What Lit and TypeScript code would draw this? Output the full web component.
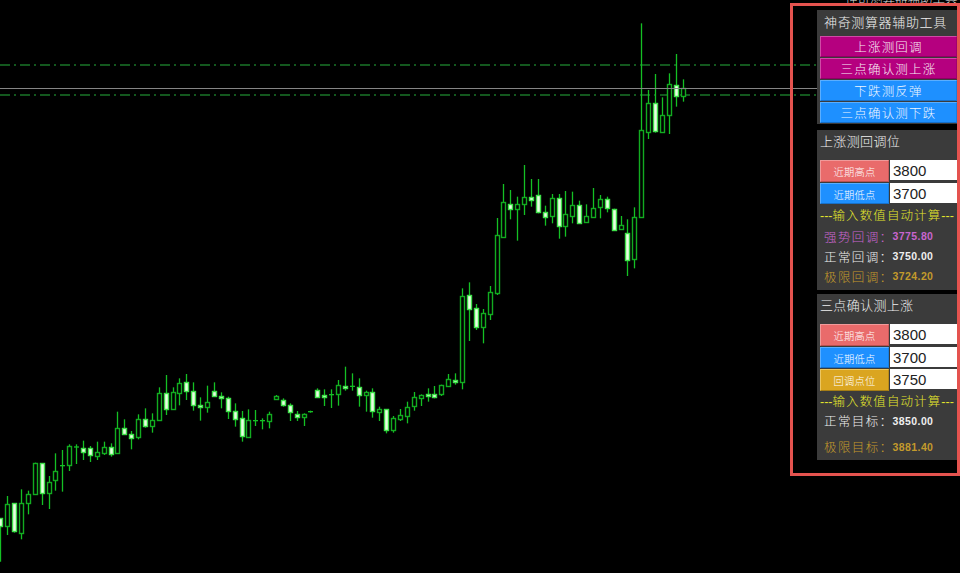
import { LitElement, html, css, svg } from "lit";
import { customElement } from "lit/decorators.js";

// [high, low, bodyTop, bodyBottom, filled] in zoom-crop pixels
type C = [number, number, number, number, number];
const G1: C[] = [
  [475,605,475,498,1],[408,525,433,498,0],[430,518,430,515,1],[388,538,428,517,0],[392,463,403,430,0],
  [308,402,308,402,0],[309,435,309,400,1],[348,447,367,401,0],[280,392,333,361,0],[270,395,316,318,2],
  [253,333,259,317,0],[253,312,260,262,2],[242,300,264,277,1],[258,306,263,284,1],[245,300,276,287,0],
  [245,285,260,278,0],[250,290,262,284,1],[155,282,204,280,0],[178,225,205,222,1],[213,268,222,233,1],
  [163,238,178,233,0],[145,203,178,198,1],[160,218,181,200,0],[82,183,100,182,0],[45,165,100,148,1],
  [82,150,97,149,0],[55,136,68,97,0],[42,120,65,93,1],[67,152,93,135,1],[112,182,136,143,1],
  [77,158,127,143,0],[67,110,93,108,1],[97,145,108,114,1],[110,177,115,155,1],[130,200,152,176,1],
];
const G2: C[] = [
  [423,515,445,500,1],[418,500,450,500,0],[420,468,451,453,2],[445,478,451,453,2],[425,475,432,452,0],
  [375,388,378,387,0],[385,410,391,405,1],[400,453,404,426,1],[423,453,432,441,1],[430,468,433,441,0],
  [422,428,424,426,2],[355,383,360,382,1],[358,408,375,382,1],[358,414,373,375,2],[330,407,344,371,0],
  [290,362,347,351,1],[310,362,348,350,2],[325,410,350,374,1],[362,425,366,374,0],[355,443,367,425,1],
  [410,453,416,426,0],[417,490,417,480,1],[438,488,444,480,0],[417,453,434,446,0],[395,460,411,437,0],
  [366,422,382,410,0],[373,408,376,385,0],[355,395,373,380,1],[348,385,373,381,1],[344,378,344,372,0],
  [312,348,326,346,0],[310,344,329,335,1],[55,358,77,334,0],[37,213,76,118,1],[102,180,115,173,1],
];
const G3: C[] = [
  [252,355,265,308,0],[183,285,200,266,0],[-20,210,30,203,0],
];
const G4: C[] = [
  [552,712,607,712,0],[570,658,611,625,1],[590,722,611,625,0],[495,645,590,610,0],[537,620,590,600,1],
  [537,640,586,636,1],[617,677,636,650,1],[582,670,595,650,0],[582,716,595,680,1],[573,710,643,680,0],
  [575,670,616,650,0],[602,670,615,668,1],[613,668,649,667,0],[564,650,623,650,0],[585,655,598,622,0],
  [590,637,597,625,1],[626,692,626,688,1],[648,689,676,689,0],[658,828,698,780,1],[622,805,652,779,0],
  [70,652,391,652,0],[270,417,308,394,0],[222,398,310,394,1],[292,398,344,394,0],[220,402,251,344,0],
  [162,320,254,288,1],[238,305,265,290,0],
];
const scale = (g: C[], y0: number): C[] =>
  g.map(([h, l, t, b, k]) => [y0 + h / 3, y0 + l / 3, y0 + t / 3, y0 + b / 3, k] as C);
const fix3 = scale(G3, 225);
fix3[2][0] = 218;
const CANDLES: C[] = [...scale(G1, 360), ...scale(G2, 270), ...fix3, ...scale(G4, 0)];

function candle(c: C, i: number) {
  const x = Math.round(0.3 + i * 6.892) + 0.5;
  const [h, l, t, b, k] = c;
  const cls = k === 0 ? "hollow" : "solid";
  return svg`<line class="w" x1=${x} x2=${x} y1=${h} y2=${l}></line>
    ${k === 2
      ? svg`<line class="w" x1=${x - 2.5} x2=${x + 2.5} y1=${(t + b) / 2} y2=${(t + b) / 2}></line>`
      : svg`<rect class=${cls} x=${x - 2} y=${Math.round(t) + 0.5} width="4" height=${Math.max(2, Math.round(b - t))}></rect>`}`;
}

@customElement("app-root")
export class AppRoot extends LitElement {
  static styles = css`
    :host {
      display: block;
      position: relative;
      width: 960px;
      height: 573px;
      overflow: hidden;
      background: #000;
      font-family: "Noto Sans CJK SC", "Liberation Sans", sans-serif;
      font-weight: 300;
    }
    .chart { position: absolute; inset: 0; }
    .chart .w { stroke: #14c024; stroke-width: 1.3; }
    .chart .hollow { fill: #000; stroke: #12ab20; stroke-width: 1.4; }
    .chart .solid { fill: #e9ffe2; stroke: #3fe04a; stroke-width: 1.4; }
    .level { stroke: #1a7628; stroke-width: 1.4; stroke-dasharray: 10 4 2 4; }
    .ask { stroke: #858585; stroke-width: 1.2; }
    .cut {
      position: absolute;
      left: 845px;
      top: -9px;
      font-size: 12.5px;
      line-height: 14px;
      color: #ddd;
      white-space: nowrap;
    }
    .frame {
      position: absolute;
      left: 789.5px;
      top: 3px;
      width: 170.5px;
      height: 473px;
      box-sizing: border-box;
      border: 3px solid #e5534f;
      pointer-events: none;
    }
    .panel {
      position: absolute;
      left: 817px;
      top: 10px;
      width: 140px;
      display: flex;
      flex-direction: column;
      color: #efefef;
    }
    .sec { background: #3b3b3b; display: flex; flex-direction: column; }
    .s1 { height: 114px; }
    .s2 { height: 160px; margin-top: 6px; }
    .s3 { height: 165.5px; margin-top: 4px; }
    .title {
      height: 26px;
      line-height: 23px;
      padding-left: 7px;
      font-size: 13px;
      letter-spacing: 0.65px;
      white-space: nowrap;
    }
    .btns { display: flex; flex-direction: column; gap: 1px; padding-left: 3px; width: 137px; }
    .big {
      height: 21px;
      box-sizing: border-box;
      line-height: 19px;
      text-align: center;
      font-size: 12.5px;
      letter-spacing: 1.2px;
      color: #f8eef6;
      border: 1px solid;
    }
    .mag { background: #b5007f; border-color: #d04aa6 #a0006e #8e0062 #d04aa6; }
    .blu { background: #1e90ff; border-color: #5aaeff #1a7fe0 #1870c8 #5aaeff; color: #eef6ff; }
    .head {
      height: 22px;
      line-height: 22px;
      padding-left: 3px;
      font-size: 13px;
      letter-spacing: 0.35px;
      white-space: nowrap;
    }
    .s2 .head { margin-bottom: 8px; }
    .s3 .head { line-height: 21px; margin-bottom: 8px; }
    .rows { display: flex; flex-direction: column; gap: 1px; padding-left: 3px; }
    .row { display: flex; gap: 1px; height: 21.5px; }
    .tag {
      width: 69px;
      box-sizing: border-box;
      text-align: center;
      line-height: 21px;
      font-size: 10.25px;
      letter-spacing: 0.2px;
      color: #fff;
      border: 1px solid;
      white-space: nowrap;
    }
    .red { background: #e96b6b; border-color: #f09a9a #c95a5a #b95050 #f09a9a; }
    .sky { background: #1e90ff; border-color: #5aaeff #1a7fe0 #1870c8 #5aaeff; }
    .gold { background: #daa520; border-color: #ecc660 #b98c1a #a57d15 #ecc660; }
    .val {
      width: 67px;
      height: 20px;
      box-sizing: border-box;
      background: #fff;
      color: #222;
      padding-left: 3px;
      font: 15px/21px "Liberation Sans", sans-serif;
    }
    .auto {
      color: #e4e62c;
      font-size: 12.5px;
      letter-spacing: 1.1px;
      line-height: 22px;
      height: 22px;
      padding-left: 3px;
      white-space: nowrap;
    }
    .s3 .auto { height: 20px; line-height: 20px; }
    .auto i { font-style: normal; letter-spacing: 0; font-family: "Liberation Sans", sans-serif; }
    .res {
      display: flex;
      align-items: center;
      height: 20px;
      padding-left: 7px;
      font-size: 12.5px;
      letter-spacing: 1.4px;
      white-space: nowrap;
    }
    .res b {
      font: bold 10.5px "Liberation Sans", sans-serif;
      letter-spacing: 0.4px;
    }
    .res .colon { width: 13px; }
    .pur { color: #c865ce; }
    .gol { color: #c39a2c; }
    .tall { margin-top: 6px; }
  `;

  private rows(items: [string, string, string][]) {
    return html`<div class="rows">
      ${items.map(
        ([t, c, v]) => html`<div class="row"><div class="tag ${c}">${t}</div><div class="val">${v}</div></div>`
      )}
    </div>`;
  }

  private auto() {
    return html`<div class="auto"><i>---</i>输入数值自动计算<i>---</i></div>`;
  }

  private res(label: string, value: string, cls = "") {
    return html`<div class="res ${cls}">${label}<span class="colon">：</span><b>${value}</b></div>`;
  }

  render() {
    return html`
      <svg class="chart" width="960" height="573" viewBox="0 0 960 573">
        <line class="level" x1="0" x2="817" y1="65" y2="65"></line>
        <line class="level" x1="0" x2="817" y1="95" y2="95"></line>
        ${CANDLES.map(candle)}
        <line class="ask" x1="0" x2="817" y1="88.5" y2="88.5"></line>
      </svg>
      <div class="cut">神奇测算器辅助工具</div>
      <div class="panel">
        <section class="sec s1">
          <div class="title">神奇测算器辅助工具</div>
          <div class="btns">
            <div class="big mag">上涨测回调</div>
            <div class="big mag">三点确认测上涨</div>
            <div class="big blu">下跌测反弹</div>
            <div class="big blu">三点确认测下跌</div>
          </div>
        </section>
        <section class="sec s2">
          <div class="head">上涨测回调位</div>
          ${this.rows([["近期高点", "red", "3800"], ["近期低点", "sky", "3700"]])}
          ${this.auto()}
          ${this.res("强势回调", "3775.80", "pur")}
          ${this.res("正常回调", "3750.00")}
          ${this.res("极限回调", "3724.20", "gol")}
        </section>
        <section class="sec s3">
          <div class="head">三点确认测上涨</div>
          ${this.rows([["近期高点", "red", "3800"], ["近期低点", "sky", "3700"], ["回调点位", "gold", "3750"]])}
          ${this.auto()}
          ${this.res("正常目标", "3850.00")}
          ${this.res("极限目标", "3881.40", "gol tall")}
        </section>
      </div>
      <div class="frame"></div>
    `;
  }
}
